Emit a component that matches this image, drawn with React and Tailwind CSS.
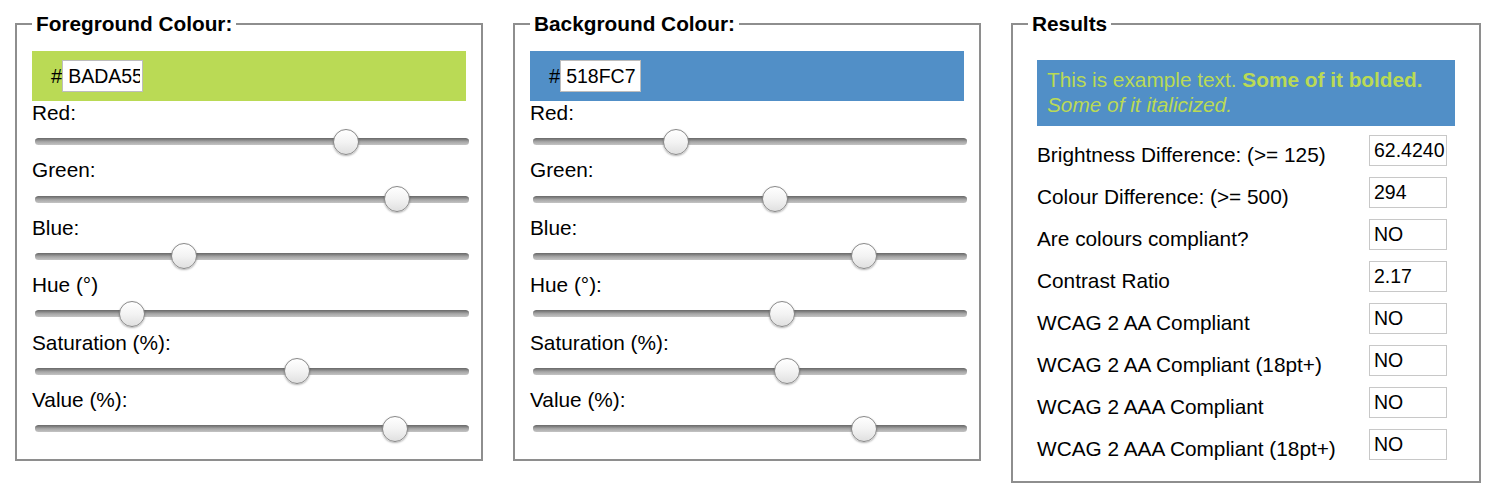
import React from 'react';

const font = { fontFamily: '"Liberation Sans", Arial, sans-serif' };

const fgSliders = [
  { label: 'Red:', value: 186, max: 255 },
  { label: 'Green:', value: 218, max: 255 },
  { label: 'Blue:', value: 85, max: 255 },
  { label: 'Hue (°)', value: 74, max: 360 },
  { label: 'Saturation (%):', value: 61, max: 100 },
  { label: 'Value (%):', value: 85, max: 100 },
];

const bgSliders = [
  { label: 'Red:', value: 81, max: 255 },
  { label: 'Green:', value: 143, max: 255 },
  { label: 'Blue:', value: 199, max: 255 },
  { label: 'Hue (°):', value: 208, max: 360 },
  { label: 'Saturation (%):', value: 59, max: 100 },
  { label: 'Value (%):', value: 78, max: 100 },
];

const results = [
  { label: 'Brightness Difference: (>= 125)', value: '62.4240' },
  { label: 'Colour Difference: (>= 500)', value: '294' },
  { label: 'Are colours compliant?', value: 'NO' },
  { label: 'Contrast Ratio', value: '2.17' },
  { label: 'WCAG 2 AA Compliant', value: 'NO' },
  { label: 'WCAG 2 AA Compliant (18pt+)', value: 'NO' },
  { label: 'WCAG 2 AAA Compliant', value: 'NO' },
  { label: 'WCAG 2 AAA Compliant (18pt+)', value: 'NO' },
];

// fake range input, thumb placed from the value
const Slider = ({ value, max }) => {
  const frac = value / max;
  return (
    <div className="relative h-[33.4px] ml-[3px] mr-[-3px] flex items-center">
      <div className="w-full h-[7px] rounded-full bg-[linear-gradient(to_bottom,#767676,#a6a6a6_45%,#c4c4c4)] border-t border-[#707070]" />
      <div
        className="absolute top-1/2 -translate-y-1/2 w-[26px] h-[26px] rounded-full border border-[#888] bg-[linear-gradient(to_bottom,#ffffff,#f3f3f3_50%,#e0e0e0)] shadow-[0_1px_2px_rgba(0,0,0,0.3)]"
        style={{ left: `calc(${frac} * (100% - 26px))` }}
      />
    </div>
  );
};

const ColourPanel = ({ title, hex, bg, sliders, width }) => (
  <fieldset className={`${width} border-2 border-[#8e8e8e] px-[15px] pt-[15px] pb-[14px]`}>
    <legend className="px-[4px] text-[20.8px] leading-[24px] font-bold text-black">{title}</legend>
    <div className={`h-[50px] ${bg} flex items-center pl-[19px]`}>
      <span className="text-[20px] text-black leading-[22px]">#</span>
      <div className="w-[81px] h-[32px] bg-white border border-[#bdbdbd] pl-[5px] pt-[4px] text-[19.5px] leading-[22px] text-black">
        <div className="w-[72px] overflow-hidden whitespace-nowrap">{hex}</div>
      </div>
    </div>
    {sliders.map((s) => (
      <div key={s.label}>
        <div className="text-[20.8px] leading-[24px] text-black">{s.label}</div>
        <Slider value={s.value} max={s.max} />
      </div>
    ))}
  </fieldset>
);

const App = () => {
  return (
    <div className="bg-white w-[1493px] h-[500px] pt-[12px] pl-[15px] flex items-start gap-[30px]" style={font}>
      <ColourPanel title="Foreground Colour:" hex="BADA55" bg="bg-[#BADA55]" sliders={fgSliders} width="w-[468px]" />
      <ColourPanel title="Background Colour:" hex="518FC7" bg="bg-[#518FC7]" sliders={bgSliders} width="w-[468px]" />

      <fieldset className="w-[470px] border-2 border-[#8e8e8e] px-[15px] pt-[15px] pb-[1px]">
        <legend className="px-[4px] text-[20.8px] leading-[24px] font-bold text-black">Results</legend>
        <div className="p-[9px]">
          <div className="bg-[#518FC7] text-[#BADA55] text-[20.8px] leading-[25px] px-[10px] pt-[7px] pb-[9px]">
            This is example text. <strong>Some of it bolded.</strong>
            <br />
            <em>Some of it italicized.</em>
          </div>
          <div className="mt-[9px] pr-[8px]">
            {results.map((r) => (
              <div key={r.label} className="h-[42px] flex items-start justify-between">
                <span className="mt-[8px] text-[20.8px] leading-[24px] text-black">{r.label}</span>
                <div className="w-[78px] h-[31px] border border-[#c8c8c8] pl-[4px] pt-[3px] text-[19.5px] leading-[22px] text-black">
                  {r.value}
                </div>
              </div>
            ))}
          </div>
        </div>
      </fieldset>
    </div>
  );
};

export default App;
